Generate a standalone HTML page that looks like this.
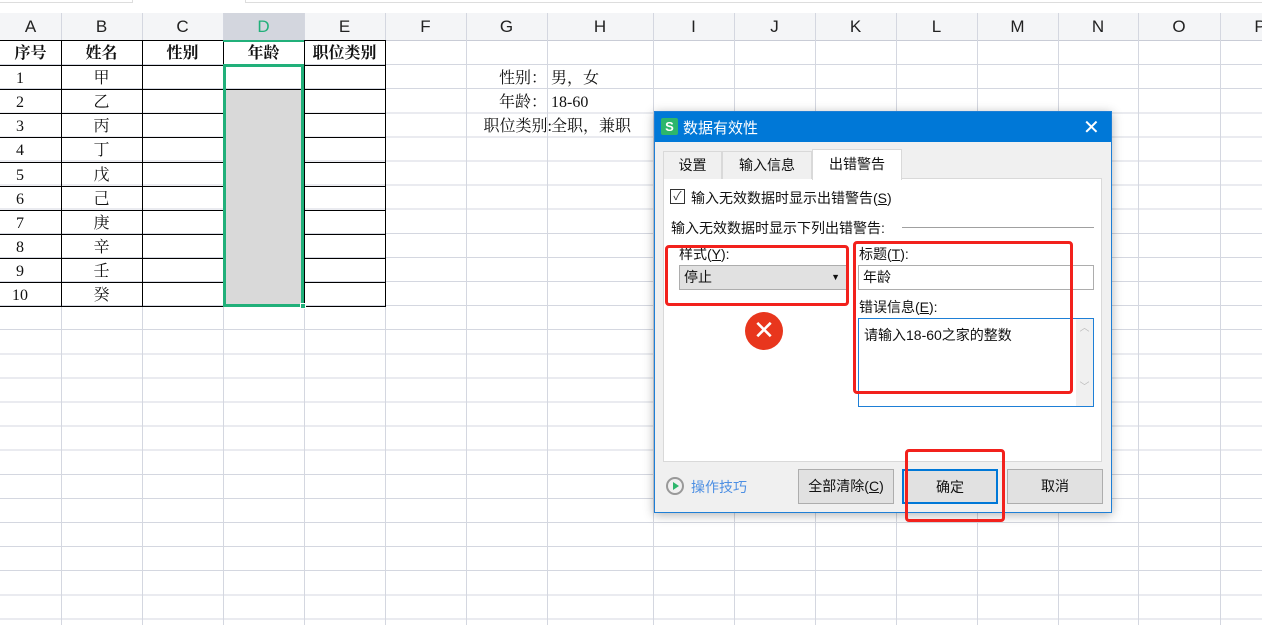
<!DOCTYPE html>
<html><head><meta charset="utf-8"><style>
*{box-sizing:border-box;margin:0;padding:0}
body{width:1262px;height:625px;overflow:hidden;background:#fff;position:relative;font-family:"Liberation Sans","Noto Sans CJK SC",sans-serif}
.abs{position:absolute}
.grid{left:0;top:41px;width:1262px;height:584px;
background-image:repeating-linear-gradient(to bottom,transparent 0,transparent 23.1px,#d4d7e0 23.1px,#d4d7e0 24.1px)}
.vl{position:absolute;top:13px;width:1px;height:612px;background:#d4d7e0}
.hdr{left:0;top:13px;width:1262px;height:28px;background:#f4f5f7;border-bottom:1px solid #c9ccd6}
.hc{position:absolute;top:13px;height:27px;line-height:27px;text-align:center;font-size:17px;color:#222}
.c{position:absolute;text-align:center;font-family:"Liberation Serif","Noto Serif CJK SC",serif;font-size:16px;color:#111;line-height:24px}
.bl{position:absolute;background:#000}
.dlg{left:654px;top:111px;width:458px;height:402px;background:#f0f0f0;border:1px solid #1e7fd6;box-shadow:0 2px 10px rgba(0,0,0,.3)}
.dt{font-family:"Liberation Sans","Noto Sans CJK SC",sans-serif;font-size:14px;color:#111}
.red{position:absolute;border:3px solid #f2211c;border-radius:4px}
.btn{position:absolute;top:469px;height:35px;border:1px solid #adadad;background:#e1e1e1;text-align:center;line-height:33px;font-size:14px;color:#111}
</style></head><body>
<div class="abs" style="left:0;top:0;width:1262px;height:13px;background:#fff"></div>
<div class="abs" style="left:0;top:0;width:133px;height:3px;border-bottom:1px solid #ddd;border-right:1px solid #ddd"></div>
<div class="abs" style="left:245px;top:0;width:1017px;height:3px;border-bottom:1px solid #ddd;border-left:1px solid #ddd"></div>
<div class="abs grid"></div>
<div class="abs hdr"></div>
<div class="abs" style="left:223px;top:13px;width:81px;height:27px;background:#d3d6de"></div>
<div id="g"></div>
<div class="abs" style="left:223px;top:64px;width:81px;height:243px;border:3px solid #21b07a"></div>
<div class="abs" style="left:226px;top:90px;width:75px;height:214px;background:#d9d9d9"></div>
<div class="abs" style="left:300px;top:303px;width:6px;height:6px;background:#21b07a;border:1px solid #fff"></div>
<div class="abs" style="left:223px;top:40px;width:81px;height:2px;background:#21b07a"></div>

<div class="c" style="left:466px;top:67px;width:81px;text-align:right">性别：</div>
<div class="c" style="left:551px;top:67px;text-align:left">男，女</div>
<div class="c" style="left:466px;top:91px;width:81px;text-align:right">年龄：</div>
<div class="c" style="left:551px;top:91px;text-align:left">18-60</div>
<div class="c" style="left:460px;top:115px;width:92px;text-align:right">职位类别:</div>
<div class="c" style="left:551px;top:115px;text-align:left">全职，兼职</div>

<div class="abs dlg">
 <div class="abs" style="left:0;top:0;width:456px;height:30px;background:#0078d7"></div>
 <div class="abs" style="left:6px;top:6px;width:17px;height:17px;background:#2db66c;border-radius:2px;color:#fff;font-size:13px;font-weight:bold;text-align:center;line-height:17px">S</div>
 <div class="abs dt" style="left:28px;top:5px;color:#fff;font-size:15px">数据有效性</div>
 <div class="abs" style="left:428px;top:3px;color:#fff;font-size:20px;font-family:'DejaVu Sans'">✕</div>
 <div class="abs" style="left:8px;top:66px;width:439px;height:284px;background:#fff;border:1px solid #d9d9d9"></div>
 <div class="abs dt" style="left:8px;top:39px;width:59px;height:28px;border:1px solid #d9d9d9;border-bottom:none;background:#f0f0f0;text-align:center;line-height:26px">设置</div>
 <div class="abs dt" style="left:67px;top:39px;width:90px;height:28px;border:1px solid #d9d9d9;border-bottom:none;background:#f0f0f0;text-align:center;line-height:26px">输入信息</div>
 <div class="abs dt" style="left:157px;top:37px;width:90px;height:31px;border:1px solid #d9d9d9;border-bottom:none;background:#fff;text-align:center;line-height:28px">出错警告</div>
 <div class="abs" style="left:15px;top:77px;width:15px;height:15px;border:1px solid #333;background:#fff;font-size:12px;line-height:13px;text-align:center;color:#333">✓</div>
 <div class="abs dt" style="left:36px;top:76px">输入无效数据时显示出错警告(<u>S</u>)</div>
 <div class="abs dt" style="left:16px;top:106px">输入无效数据时显示下列出错警告:</div>
 <div class="abs" style="left:247px;top:115px;width:192px;height:1px;background:#a0a0a0"></div>
 <div class="abs dt" style="left:24px;top:132px">样式(<u>Y</u>):</div>
 <div class="abs dt" style="left:24px;top:153px;width:168px;height:25px;background:#e1e1e1;border:1px solid #adadad;line-height:23px;padding-left:4px">停止<span style="position:absolute;right:6px;top:0;font-size:9px">▼</span></div>
 <div class="abs" style="left:90px;top:200px;width:38px;height:38px;border-radius:50%;background:#e8361d;color:#fff;font-size:26px;text-align:center;line-height:38px;font-family:'DejaVu Sans'">✕</div>
 <div class="abs dt" style="left:204px;top:132px">标题(<u>T</u>):</div>
 <div class="abs dt" style="left:203px;top:153px;width:236px;height:25px;background:#fff;border:1px solid #adadad;line-height:23px;padding-left:4px">年龄</div>
 <div class="abs dt" style="left:204px;top:185px">错误信息(<u>E</u>):</div>
 <div class="abs dt" style="left:203px;top:206px;width:236px;height:89px;background:#fff;border:1px solid #1e7fd6;padding:6px 5px">请输入18-60之家的整数</div>
 <div class="abs" style="left:421px;top:207px;width:17px;height:87px;background:#f0f0f0;color:#bbb;font-size:10px;text-align:center">︿<br><br><br><br><br>﹀</div>
 <div class="abs" style="left:11px;top:365px;width:18px;height:18px;border:2px solid #999;border-radius:50%"></div>
 <div class="abs" style="left:18px;top:370px;width:0;height:0;border-left:6px solid #2db66c;border-top:4px solid transparent;border-bottom:4px solid transparent"></div>
 <div class="abs dt" style="left:36px;top:365px;color:#4d8fe3">操作技巧</div>
</div>
<div class="btn" style="left:798px;width:96px">全部清除(<u>C</u>)</div>
<div class="btn" style="left:902px;width:96px;border:2px solid #0078d7">确定</div>
<div class="btn" style="left:1007px;width:96px">取消</div>
<div class="red" style="left:665px;top:245px;width:184px;height:61px"></div>
<div class="red" style="left:853px;top:241px;width:220px;height:153px"></div>
<div class="red" style="left:905px;top:449px;width:100px;height:73px"></div>
<script>
var g=document.getElementById('g'),h='';
var cols=[0,61,142,223,304,385,466,547,653,734,815,896,977,1058,1138,1220,1300];
var L='ABCDEFGHIJKLMNOP';
for(var i=0;i<16;i++){h+='<div class="vl" style="left:'+cols[i+1]+'px"></div>';
h+='<div class="hc" style="left:'+cols[i]+'px;width:'+(cols[i+1]-cols[i])+'px;'+(i==3?'color:#21b07a':'')+'">'+L[i]+'</div>';}
var rh=24.1,t0=42;
var hd=['序号','姓名','性别','年龄','职位类别'];
var nm='甲乙丙丁戊己庚辛壬癸';
h+='<div class="bl" style="left:0;width:385px;height:1px;top:40px"></div>';
for(var r=1;r<=11;r++)h+='<div class="bl" style="left:0;width:385px;height:1px;top:'+Math.round(t0+r*rh-1)+'px"></div>';
for(var c=1;c<=5;c++)h+='<div class="bl" style="top:40px;height:267px;width:1px;left:'+cols[c]+'px"></div>';
for(var c=0;c<5;c++)h+='<div class="c" style="font-weight:bold;top:42px;left:'+cols[c]+'px;width:'+(cols[c+1]-cols[c])+'px">'+hd[c]+'</div>';
for(var r=1;r<=10;r++){var y=Math.round(t0+r*rh)+1;
h+='<div class="c" style="top:'+y+'px;left:0;width:40px">'+r+'</div>';
h+='<div class="c" style="top:'+y+'px;left:61px;width:81px">'+nm[r-1]+'</div>';}
g.innerHTML=h;
</script>
</body></html>
